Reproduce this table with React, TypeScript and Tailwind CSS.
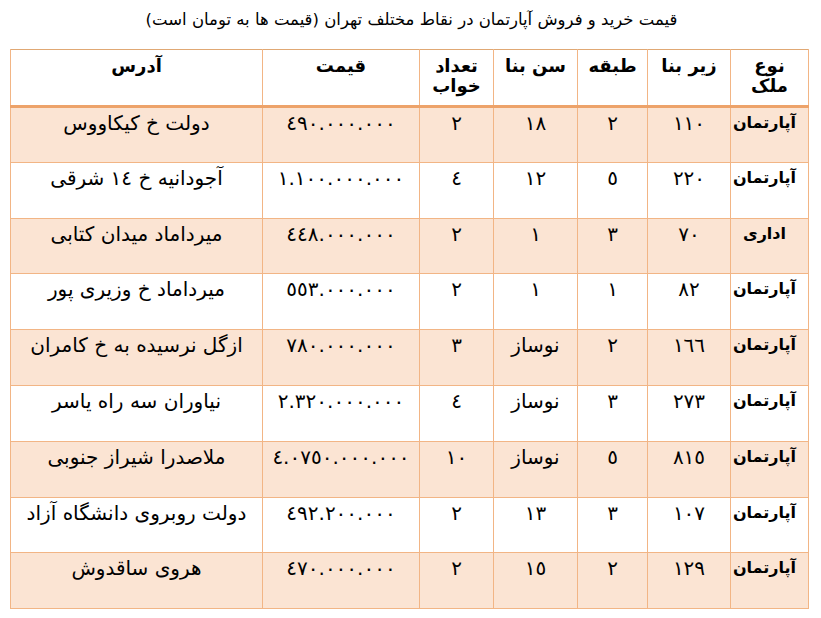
const headers = ["نوع ملک", "زیر بنا", "طبقه", "سن بنا", "تعداد خواب", "قیمت", "آدرس"];

const rows = [
  ["آپارتمان", "١١٠", "٢", "١٨", "٢", "٤٩٠.٠٠٠.٠٠٠", "دولت خ کیکاووس"],
  ["آپارتمان", "٢٢٠", "٥", "١٢", "٤", "١.١٠٠.٠٠٠.٠٠٠", "آجودانیه خ ١٤ شرقی"],
  ["اداری", "٧٠", "٣", "١", "٢", "٤٤٨.٠٠٠.٠٠٠", "میرداماد میدان کتابی"],
  ["آپارتمان", "٨٢", "١", "١", "٢", "٥٥٣.٠٠٠.٠٠٠", "میرداماد خ وزیری پور"],
  ["آپارتمان", "١٦٦", "٢", "نوساز", "٣", "٧٨٠.٠٠٠.٠٠٠", "ازگل نرسیده به خ کامران"],
  ["آپارتمان", "٢٧٣", "٣", "نوساز", "٤", "٢.٣٢٠.٠٠٠.٠٠٠", "نیاوران سه راه یاسر"],
  ["آپارتمان", "٨١٥", "٥", "نوساز", "١٠", "٤.٠٧٥٠.٠٠٠.٠٠٠", "ملاصدرا شیراز جنوبی"],
  ["آپارتمان", "١٠٧", "٣", "١٣", "٢", "٤٩٢.٢٠٠.٠٠٠", "دولت روبروی دانشگاه آزاد"],
  ["آپارتمان", "١٢٩", "٢", "١٥", "٢", "٤٧٠.٠٠٠.٠٠٠", "هروی ساقدوش"],
];

// headers that wrap onto two lines
const twoLine = ["نوع ملک", "تعداد خواب"];

export default function App() {
  return (
    <div
      dir="rtl"
      className="w-[821px] h-[618px] bg-white text-black pt-[8px] px-[12px]"
      style={{ fontFamily: '"DejaVu Sans", sans-serif' }}
    >
      <h1 className="text-center text-[16.5px] leading-[24px] mb-[17px] pl-[2px]">
        قیمت خرید و فروش آپارتمان در نقاط مختلف تهران (قیمت ها به تومان است)
      </h1>

      <table className="table-fixed border-collapse w-[798px] border border-[#e0a874]">
        <colgroup>
          <col className="w-[78px]" />
          <col className="w-[83px]" />
          <col className="w-[70px]" />
          <col className="w-[84px]" />
          <col className="w-[74px]" />
          <col className="w-[157px]" />
          <col className="w-[252px]" />
        </colgroup>
        <thead>
          <tr className="h-[57px] border-b-[3px] border-[#eda36a]">
            {headers.map((h) => (
              <th
                key={h}
                className="align-top text-center font-bold text-[18px] leading-[20px] pt-[6px] px-1 border-x border-[#f2b585]"
              >
                {twoLine.includes(h) ? (
                  <>
                    {h.split(" ")[0]}
                    <br />
                    {h.split(" ")[1]}
                  </>
                ) : (
                  h
                )}
              </th>
            ))}
          </tr>
        </thead>
        <tbody>
          {rows.map((r, i) => (
            <tr
              key={i}
              className={`h-[55.8px] border-b border-[#f2b585] ${i % 2 === 0 ? "bg-[#fbe4d3]" : "bg-white"}`}
            >
              {r.map((c, j) => (
                <td
                  key={j}
                  className={`align-top text-center leading-[24px] pt-[3px] border-x border-[#f2b585] whitespace-nowrap ${
                    j === 0 ? "font-bold text-[16px] pr-[10px] pl-0" : "text-[20px] px-1"
                  }`}
                >
                  {c}
                </td>
              ))}
            </tr>
          ))}
        </tbody>
      </table>
    </div>
  );
}
